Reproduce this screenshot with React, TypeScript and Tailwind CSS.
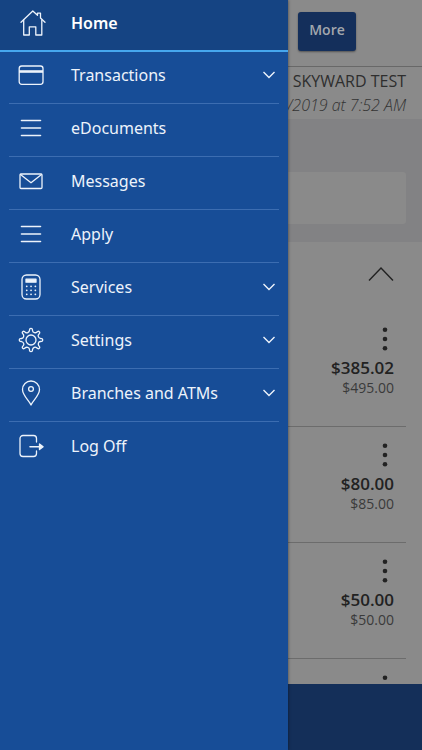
import type { ReactNode } from "react";

function Icon({ children }: { children: ReactNode }) {
  return (
    <svg
      aria-hidden="true"
      viewBox="0 0 30 30"
      className="size-[30px] shrink-0 fill-none stroke-[#edf3fb] stroke-[1.3]"
      strokeLinecap="round"
      strokeLinejoin="round"
    >
      {children}
    </svg>
  );
}

const homeIcon = (
  <Icon>
    <path d="M5 14.300 16.800 3l4.700 4.300V5.200h3v4.900l4.500 4.200" />
    <path d="M7.700 12v15h5.600v-8.200h6.500V27h6V12" />
  </Icon>
);

const cardIcon = (
  <Icon>
    <rect x="3.200" y="6" width="23.800" height="18.300" rx="2.500" />
    <path d="M3 11.500h24" strokeWidth="2.600" strokeLinecap="butt" />
  </Icon>
);

const linesIcon = (
  <Icon>
    <path d="M5.500 7.500h19M5.500 15h19M5.500 22.500h19" strokeWidth="1.600" />
  </Icon>
);

const mailIcon = (
  <Icon>
    <rect x="4" y="8" width="22" height="14.500" rx="1" />
    <path d="m4.500 8.500 10.500 8.300 10.500-8.300" />
  </Icon>
);

const calculatorIcon = (
  <Icon>
    <rect x="6" y="3" width="18" height="24" rx="4.500" />
    <rect x="10" y="7.200" width="10" height="3" fill="#edf3fb" />
    <path
      d="M10.700 14.300h.1M15 14.300h.1M19.300 14.300h.1M10.700 18.300h.1M15 18.300h.1M19.300 18.300h.1M10.700 22.300h.1M15 22.300h.1M19.300 22.300h.1"
      strokeWidth="1.700"
    />
  </Icon>
);

const gearIcon = (
  <Icon>
    <circle cx="15" cy="15" r="5" />
    <path d="M13.500 5.500Q13.400 3.300 15 3.300T16.500 5.500Q16.600 7.200 18.300 7.600T20.700 7.200Q22.200 5.600 23.300 6.700T22.800 9.300Q21.700 10.500 22.400 11.800T24.500 13.500Q26.700 13.400 26.700 15T24.500 16.500Q22.800 16.600 22.400 18.200T22.800 20.700Q24.400 22.200 23.300 23.300T20.700 22.800Q19.500 21.700 18.200 22.400T16.500 24.500Q16.600 26.700 15 26.700T13.500 24.500Q13.400 22.800 11.800 22.400T9.300 22.800Q7.800 24.400 6.700 23.300T7.200 20.700Q8.300 19.500 7.600 18.200T5.500 16.500Q3.300 16.600 3.300 15T5.500 13.500Q7.200 13.400 7.600 11.800T7.200 9.300Q5.600 7.800 6.700 6.700T9.300 7.200Q10.500 8.300 11.800 7.600T13.500 5.500z" />
  </Icon>
);

const pinIcon = (
  <Icon>
    <path d="M15 27c-1.300-3.500-8.500-9.500-8.500-15.500a8.500 8.500 0 0 1 17 0C23.500 17.500 16.300 23.500 15 27z" />
    <circle cx="15" cy="11" r="2.400" />
  </Icon>
);

const logOffIcon = (
  <Icon>
    <path d="M20.500 11V7.500a3 3 0 0 0-3-3H7a3 3 0 0 0-3 3v15a3 3 0 0 0 3 3h10.500a3 3 0 0 0 3-3V20" />
    <path d="M14 15.800h9" strokeWidth="1.600" />
    <path d="m23.500 13 3.600 2.800-3.600 2.800z" fill="#edf3fb" />
  </Icon>
);

const items = [
  { label: "Transactions", icon: cardIcon, expandable: true },
  { label: "eDocuments", icon: linesIcon, expandable: false },
  { label: "Messages", icon: mailIcon, expandable: false },
  { label: "Apply", icon: linesIcon, expandable: false },
  { label: "Services", icon: calculatorIcon, expandable: true },
  { label: "Settings", icon: gearIcon, expandable: true },
  { label: "Branches and ATMs", icon: pinIcon, expandable: true },
  { label: "Log Off", icon: logOffIcon, expandable: false },
];

const accounts = [
  { available: "$385.02", current: "$495.00" },
  { available: "$80.00", current: "$85.00" },
  { available: "$50.00", current: "$50.00" },
];

function MoreDots() {
  return (
    <button type="button" aria-label="Account options" className="flex h-6 w-[18px] items-center justify-center">
      <svg aria-hidden="true" viewBox="0 0 6 24" className="h-6 w-[6px] fill-[#222222]">
        <circle cx="3" cy="2.700" r="2.300" />
        <circle cx="3" cy="12" r="2.300" />
        <circle cx="3" cy="21.300" r="2.300" />
      </svg>
    </button>
  );
}

function Drawer() {
  return (
    <nav className="z-10 w-72 shrink-0 bg-[#174d97] font-['Noto_Sans',sans-serif] text-base text-[#edf3fb] shadow-[0_0_3px_rgba(0,0,0,0.5)]">
      <button
        type="button"
        className="flex h-[52px] w-full items-center border-b-2 border-[#46a7ee] bg-[#154483] pr-3 pb-1 pl-4 text-left font-semibold text-white"
      >
        {homeIcon}
        <span className="ml-[25px]">Home</span>
      </button>
      <ul className="-mt-px px-[9px]">
        {items.map((item) => (
          <li key={item.label} className="border-b border-[#3c6db1] last:border-b-0">
            <button type="button" className="flex h-[52px] w-full items-center pr-[3px] pb-1 pl-[7px] text-left">
              {item.icon}
              <span className="ml-[25px] flex-1">{item.label}</span>
              {item.expandable && (
                <svg
                  aria-hidden="true"
                  viewBox="0 0 14 14"
                  className="size-[14px] fill-none stroke-[#edf3fb] stroke-[1.4]"
                >
                  <path d="m1.500 4 5.500 5.500L12.500 4" />
                </svg>
              )}
            </button>
          </li>
        ))}
      </ul>
    </nav>
  );
}

export default function App() {
  return (
    <div className="flex h-screen overflow-hidden bg-[#8a8a8a] font-['Open_Sans','Noto_Sans',sans-serif]">
      <Drawer />
      <main className="flex min-w-0 flex-1 flex-col">
        <header className="flex h-[67px] shrink-0 items-start border-b border-[#686868] px-[10px] pt-3">
          <button
            type="button"
            className="h-[39px] w-[58px] rounded-[3px] bg-[#142f5b] pb-1 text-sm font-semibold text-[#a3a7ad] shadow-[0_1px_2px_rgba(0,0,0,0.4)]"
          >
            More
          </button>
        </header>
        <div className="flex h-[52px] shrink-0 flex-col items-end pt-[2px] pr-4 whitespace-nowrap">
          <p className="text-base leading-6 text-[#2e2e2e]">. SKYWARD TEST</p>
          <p className="text-base leading-6 font-light text-[#333333] italic">/2019 at 7:52 AM</p>
        </div>
        <div className="h-[123px] shrink-0 bg-[#828284] pt-[53px] pr-4">
          <div className="h-[52px] rounded-r-[3px] bg-[#8a8a8a]" />
        </div>
        <section className="flex min-h-0 flex-1 flex-col overflow-hidden pr-4">
          <div className="flex h-[69px] shrink-0 justify-end pt-5 pr-3">
            <button type="button" aria-label="Collapse accounts" className="h-6 w-[26px]">
              <svg aria-hidden="true" viewBox="0 0 26 24" className="h-6 w-[26px] fill-none stroke-[#222222] stroke-[1.4]">
                <path d="m1 18.500 12-12.500 12 12.500" />
              </svg>
            </button>
          </div>
          <ul>
            {accounts.map((account) => (
              <li
                key={account.available}
                className="flex h-[116px] flex-col items-end border-b border-[#6c6c6c] pt-4 pr-3"
              >
                <MoreDots />
                <span className="mt-[5px] text-[17px] leading-6 font-semibold text-[#222222]">{account.available}</span>
                <span className="text-sm leading-4 text-[#3a3a3a]">{account.current}</span>
              </li>
            ))}
            <li className="flex justify-end pt-4 pr-3">
              <MoreDots />
            </li>
          </ul>
        </section>
        <footer className="h-[66px] shrink-0 bg-[#142f59]" />
      </main>
    </div>
  );
}
